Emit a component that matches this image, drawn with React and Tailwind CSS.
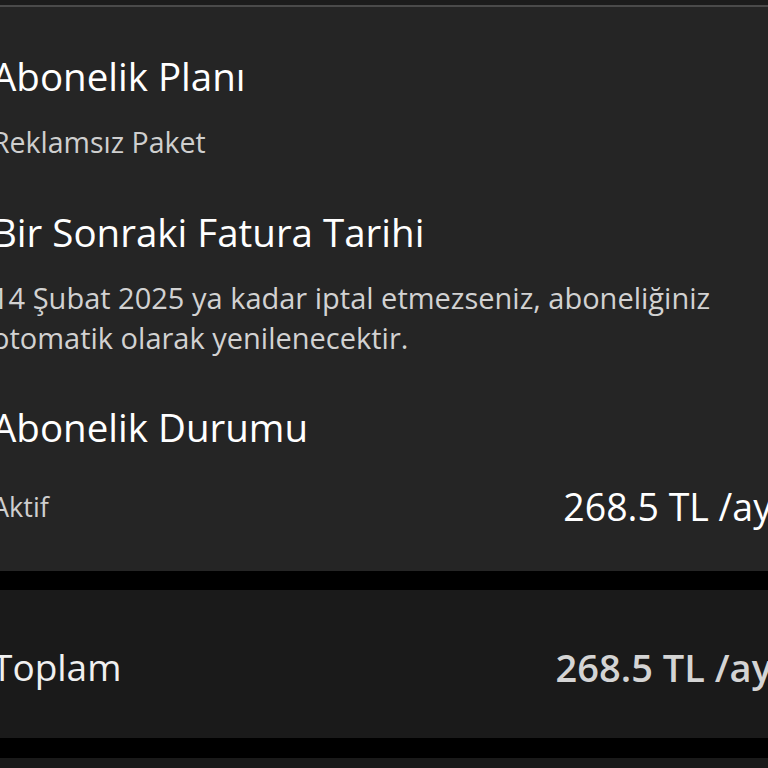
import React from 'react';

const font = { fontFamily: '"Open Sans", "Noto Sans", sans-serif' };

function Section({ title, children, className = '' }) {
    return (
        <div className={className}>
            <h2 className="text-[38.5px] leading-[46px] text-white">{title}</h2>
            {children}
        </div>
    );
}

export default function App() {
    return (
        <div className="w-full h-[768px] overflow-hidden bg-black" style={font}>
            <div className="-ml-[8px] w-[800px]">
                <div className="h-[5px] bg-[#1c1c1c]" />
                <div className="border-t-2 border-[#4a4a4a] bg-[#252525] pt-[46px] pb-[42px] pr-[20px]">
                    <Section title="Abonelik Planı">
                        <p className="mt-[25px] text-[28.5px] leading-[36px] text-[#cfcfcf]">Reklamsız Paket</p>
                    </Section>
                    <Section title="Bir Sonraki Fatura Tarihi" className="mt-[49px]">
                        <p className="mt-[23px] text-[29px] leading-[40px] text-[#d2d2d2] w-[745px]">
                            14 Şubat 2025 ya kadar iptal etmezseniz, aboneliğiniz otomatik olarak yenilenecektir.
                        </p>
                    </Section>
                    <Section title="Abonelik Durumu" className="mt-[46px]">
                        <div className="mt-[35px] flex items-center justify-between">
                            <span className="text-[27px] leading-[44px] text-[#cfcfcf]">Aktif</span>
                            <span className="text-[37.5px] leading-[44px] text-white">268.5 TL /ay</span>
                        </div>
                    </Section>
                </div>
                <div className="h-[19px] bg-black" />
                <div className="h-[148px] bg-[#1a1a1a] flex items-center justify-between pr-[20px] pt-[6px]">
                    <span className="text-[37px] text-[#f0f0f0]">Toplam</span>
                    <span className="text-[38px] font-semibold text-[#d4d4d4]">268.5 TL /ay</span>
                </div>
                <div className="h-[20px] bg-black" />
                <div className="h-[40px] bg-[#1a1a1a]" />
            </div>
        </div>
    );
}
